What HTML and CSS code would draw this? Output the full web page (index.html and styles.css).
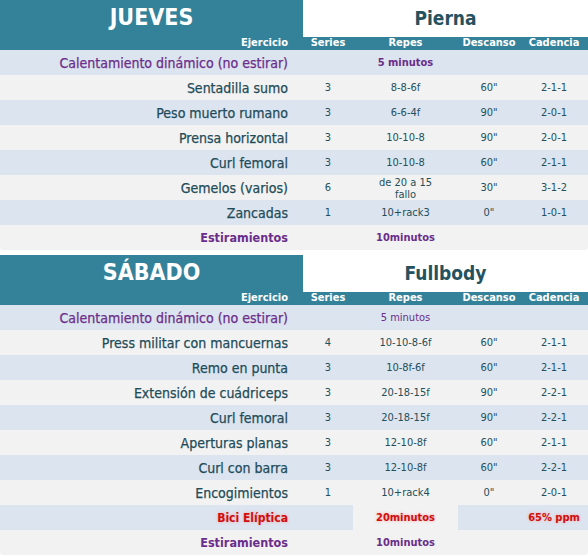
FILE: index.html
```html
<!DOCTYPE html>
<html lang="es">
  <head>
    <meta charset="UTF-8" />
    <meta name="viewport" content="width=device-width, initial-scale=1.0" />
    <title>Rutina semanal</title>
    <link rel="stylesheet" href="styles.css">
  </head>
  <body>
    <div class="day">
      <div class="day-head">
        <div class="day-name">JUEVES</div>
        <div class="day-focus">Pierna</div>
      </div>
      <div class="row labels">
        <span class="ex">Ejercicio</span><span>Series</span><span>Repes</span><span>Descanso</span><span>Cadencia</span>
      </div>
      <div class="row blue warm">
        <span class="ex">Calentamiento dinámico (no estirar)</span><span></span><span class="strong">5 minutos</span><span></span><span></span>
      </div>
      <div class="row gray">
        <span class="ex">Sentadilla sumo</span><span>3</span><span>8-8-6f</span><span>60"</span><span>2-1-1</span>
      </div>
      <div class="row blue">
        <span class="ex">Peso muerto rumano</span><span>3</span><span>6-6-4f</span><span>90"</span><span>2-0-1</span>
      </div>
      <div class="row gray">
        <span class="ex">Prensa horizontal</span><span>3</span><span>10-10-8</span><span>90"</span><span>2-0-1</span>
      </div>
      <div class="row blue">
        <span class="ex">Curl femoral</span><span>3</span><span>10-10-8</span><span>60"</span><span>2-1-1</span>
      </div>
      <div class="row gray">
        <span class="ex">Gemelos (varios)</span><span>6</span><span class="two">de 20 a 15<br>fallo</span><span>30"</span><span>3-1-2</span>
      </div>
      <div class="row blue">
        <span class="ex">Zancadas</span><span>1</span><span>10+rack3</span><span>0"</span><span>1-0-1</span>
      </div>
      <div class="row gray warm">
        <span class="ex strong">Estiramientos</span><span></span><span class="strong">10minutos</span><span></span><span></span>
      </div>
    </div>

    <div class="day">
      <div class="day-head">
        <div class="day-name">SÁBADO</div>
        <div class="day-focus">Fullbody</div>
      </div>
      <div class="row labels">
        <span class="ex">Ejercicio</span><span>Series</span><span>Repes</span><span>Descanso</span><span>Cadencia</span>
      </div>
      <div class="row blue warm">
        <span class="ex">Calentamiento dinámico (no estirar)</span><span></span><span>5 minutos</span><span></span><span></span>
      </div>
      <div class="row gray">
        <span class="ex">Press militar con mancuernas</span><span>4</span><span>10-10-8-6f</span><span>60"</span><span>2-1-1</span>
      </div>
      <div class="row blue">
        <span class="ex">Remo en punta</span><span>3</span><span>10-8f-6f</span><span>60"</span><span>2-1-1</span>
      </div>
      <div class="row gray">
        <span class="ex">Extensión de cuádriceps</span><span>3</span><span>20-18-15f</span><span>90"</span><span>2-2-1</span>
      </div>
      <div class="row blue">
        <span class="ex">Curl femoral</span><span>3</span><span>20-18-15f</span><span>90"</span><span>2-2-1</span>
      </div>
      <div class="row gray">
        <span class="ex">Aperturas planas</span><span>3</span><span>12-10-8f</span><span>60"</span><span>2-1-1</span>
      </div>
      <div class="row blue">
        <span class="ex">Curl con barra</span><span>3</span><span>12-10-8f</span><span>60"</span><span>2-2-1</span>
      </div>
      <div class="row gray">
        <span class="ex">Encogimientos</span><span>1</span><span>10+rack4</span><span>0"</span><span>2-0-1</span>
      </div>
      <div class="row blue cardio">
        <span class="ex strong">Bici Elíptica</span><span></span><span class="strong gap">20minutos</span><span></span><span class="strong">65% ppm</span>
      </div>
      <div class="row gray warm">
        <span class="ex strong">Estiramientos</span><span></span><span class="strong">10minutos</span><span></span><span></span>
      </div>
    </div>
  </body>
</html>
```

FILE: styles.css
```css
body {
  margin: 0;
  background: #ffffff;
  font-family: "DejaVu Sans Condensed", "DejaVu Sans", sans-serif;
  color: #244f5b;
}

.day {
  width: 588px;
  margin-bottom: 5px;
  border-radius: 0 0 3px 3px;
  overflow: hidden;
}

.day-head {
  display: grid;
  grid-template-columns: 303px 1fr;
  height: 35px;
}

.day-name {
  background: #34829a;
  color: #ffffff;
  font-size: 23px;
  font-weight: bold;
  text-align: center;
  line-height: 35px;
}

.day-focus {
  background: #ffffff;
  color: #25525e;
  font-size: 19px;
  font-weight: bold;
  text-align: center;
  line-height: 37px;
}

.row {
  display: grid;
  grid-template-columns: 303px 50px 105px 62px 68px;
  height: 25px;
  font-size: 11px;
  align-items: center;
  text-align: center;
}

.row span {
  display: flex;
  align-items: center;
  justify-content: center;
  height: 100%;
  overflow: hidden;
}

.row .ex {
  justify-content: flex-end;
  padding-right: 15px;
  font-size: 14px;
  color: #1f4c59;
  -webkit-text-stroke: 0.25px currentColor;
}

.row .ex.strong {
  font-size: 12.5px;
  -webkit-text-stroke: 0;
}

.labels {
  height: 15px;
  background: #34829a;
  color: #ffffff;
  font-weight: bold;
}

.labels .ex {
  font-size: 11px;
  color: #ffffff;
  -webkit-text-stroke: 0;
}

.blue {
  background: #dce4ef;
}

.gray {
  background: #f2f2f2;
}

.warm,
.warm .ex {
  color: #6b2d8b;
}

.strong {
  font-weight: bold;
}

.two {
  flex-direction: column;
  line-height: 12px;
  padding-top: 3px;
}

.cardio span {
  color: #cc1010;
  text-shadow: 0 0 3px #ff9d9d;
}

.cardio .ex {
  color: #cc1010;
}

.cardio .ex.strong {
  font-size: 12px;
}

.cardio .gap {
  background: #f2f2f2;
}
```
